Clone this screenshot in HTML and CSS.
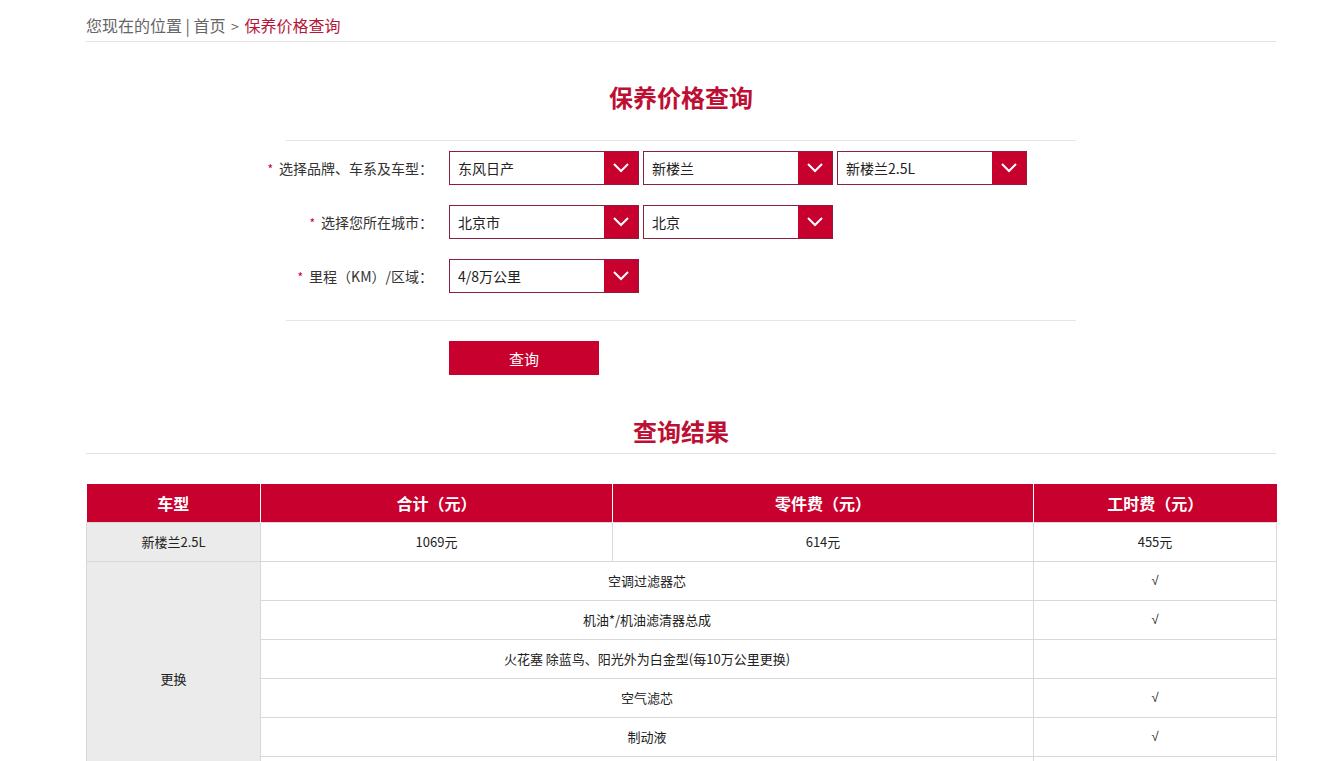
FILE: index.html
```html
<!DOCTYPE html>
<html lang="zh-CN">
<head>
<meta charset="utf-8">
<title>保养价格查询</title>
<link rel="stylesheet" href="styles.css">
</head>
<body>
<div class="page">
  <div class="crumb">您现在的位置 | 首页 <span class="gt">&gt;</span> <span class="cur">保养价格查询</span></div>

  <h1 class="title">保养价格查询</h1>

  <div class="form">
    <div class="row">
      <div class="label"><span class="txt"><span class="star">*</span>选择品牌、车系及车型：</span></div>
      <div class="sel"><span class="val">东风日产</span><span class="arrow"><svg width="16" height="10" viewBox="0 0 16 10"><polyline points="1,1 8,8 15,1" fill="none" stroke="#fff" stroke-width="2"/></svg></span></div>
      <div class="sel"><span class="val">新楼兰</span><span class="arrow"><svg width="16" height="10" viewBox="0 0 16 10"><polyline points="1,1 8,8 15,1" fill="none" stroke="#fff" stroke-width="2"/></svg></span></div>
      <div class="sel"><span class="val">新楼兰2.5L</span><span class="arrow"><svg width="16" height="10" viewBox="0 0 16 10"><polyline points="1,1 8,8 15,1" fill="none" stroke="#fff" stroke-width="2"/></svg></span></div>
    </div>
    <div class="row">
      <div class="label"><span class="txt"><span class="star">*</span>选择您所在城市：</span></div>
      <div class="sel"><span class="val">北京市</span><span class="arrow"><svg width="16" height="10" viewBox="0 0 16 10"><polyline points="1,1 8,8 15,1" fill="none" stroke="#fff" stroke-width="2"/></svg></span></div>
      <div class="sel"><span class="val">北京</span><span class="arrow"><svg width="16" height="10" viewBox="0 0 16 10"><polyline points="1,1 8,8 15,1" fill="none" stroke="#fff" stroke-width="2"/></svg></span></div>
    </div>
    <div class="row">
      <div class="label"><span class="txt"><span class="star">*</span>里程（KM）/区域：</span></div>
      <div class="sel"><span class="val">4/8万公里</span><span class="arrow"><svg width="16" height="10" viewBox="0 0 16 10"><polyline points="1,1 8,8 15,1" fill="none" stroke="#fff" stroke-width="2"/></svg></span></div>
    </div>
  </div>
  <div class="actions"><button class="btn">查询</button></div>

  <h2 class="result-title">查询结果</h2>

  <table class="tbl">
    <colgroup><col class="c1"><col class="c2"><col class="c3"><col class="c4"></colgroup>
    <thead>
      <tr><th>车型</th><th>合计（元）</th><th>零件费（元）</th><th>工时费（元）</th></tr>
    </thead>
    <tbody>
      <tr><td class="grey">新楼兰2.5L</td><td>1069元</td><td>614元</td><td>455元</td></tr>
      <tr><td class="grey" rowspan="6">更换</td><td colspan="2">空调过滤器芯</td><td class="chk">√</td></tr>
      <tr><td colspan="2">机油*/机油滤清器总成</td><td class="chk">√</td></tr>
      <tr><td colspan="2">火花塞 除蓝鸟、阳光外为白金型(每10万公里更换)</td><td></td></tr>
      <tr><td colspan="2">空气滤芯</td><td class="chk">√</td></tr>
      <tr><td colspan="2">制动液</td><td class="chk">√</td></tr>
      <tr><td colspan="2">燃油滤清器</td><td></td></tr>
    </tbody>
  </table>
</div>
</body>
</html>
```

FILE: styles.css
```css
* { box-sizing: border-box; }
body {
  margin: 0;
  background: #fff;
  font-family: "Noto Sans CJK SC", "Microsoft YaHei", sans-serif;
  color: #333;
}
.page {
  width: 1190px;
  margin-left: 86px;
  padding-bottom: 40px;
}
.crumb {
  font-size: 16px;
  line-height: 24px;
  padding-top: 13px;
  padding-bottom: 3px;
  color: #666;
  border-bottom: 1px solid #e3e3e3;
}
.crumb .gt { font-size: 14px; padding: 0 2px; }
.crumb .cur { color: #b5173a; }
.title {
  margin: 39px 0 0;
  text-align: center;
  font-size: 24px;
  line-height: 32px;
  font-weight: bold;
  color: #bd0f33;
}
.form {
  width: 790px;
  margin: 27px auto 0;
  border-top: 1px solid #e5e5e5;
  border-bottom: 1px solid #e5e5e5;
  padding: 10px 0 27px;
  display: flex;
  flex-direction: column;
  gap: 20px;
}
.row {
  display: flex;
  align-items: center;
  gap: 4px;
}
.label {
  width: 159px;
  flex-shrink: 0;
  padding-right: 12px;
  display: flex;
  justify-content: flex-end;
  font-size: 14px;
  color: #333;
}
.label .txt { white-space: nowrap; flex-shrink: 0; }
.star { color: #c8002d; font-size: 12px; margin-right: 6px; }
.sel {
  width: 190px;
  height: 34px;
  border: 1px solid #8c1e3e;
  display: flex;
  align-items: stretch;
}
.val {
  flex: 1;
  padding-left: 8px;
  font-size: 14px;
  line-height: 32px;
  color: #222;
}
.arrow {
  width: 34px;
  background: #c8002d;
  display: flex;
  align-items: center;
  justify-content: center;
}
.actions {
  width: 790px;
  margin: 20px auto 0;
  padding-left: 163px;
}
.btn {
  width: 150px;
  height: 34px;
  border: 0;
  background: #c8002d;
  color: #fff;
  font-family: inherit;
  font-size: 15px;
  padding: 0;
}
.result-title {
  margin: 40px 0 0;
  padding-bottom: 6px;
  text-align: center;
  font-size: 24px;
  line-height: 32px;
  font-weight: bold;
  color: #bd0f33;
  border-bottom: 1px solid #e3e3e3;
}
.tbl {
  margin-top: 30px;
  width: 1190px;
  border-collapse: collapse;
  table-layout: fixed;
}
.c1 { width: 174px; }
.c2 { width: 352px; }
.c3 { width: 421px; }
.c4 { width: 243px; }
.tbl th {
  background: #c8002d;
  color: #fff;
  font-size: 16px;
  font-weight: bold;
  height: 38px;
  padding: 0;
  border-left: 1px solid #fff;
  border-right: 1px solid #fff;
}
.tbl th:first-child { border-left: 0; }
.tbl th:last-child { border-right: 0; }
.tbl td {
  height: 39px;
  padding: 0;
  text-align: center;
  font-size: 13px;
  color: #222;
  border: 1px solid #d8d8d8;
}
.tbl td.chk { font-family: "Liberation Sans", sans-serif; font-size: 13px; }
.tbl td.grey { background: #ebebeb; }
```
